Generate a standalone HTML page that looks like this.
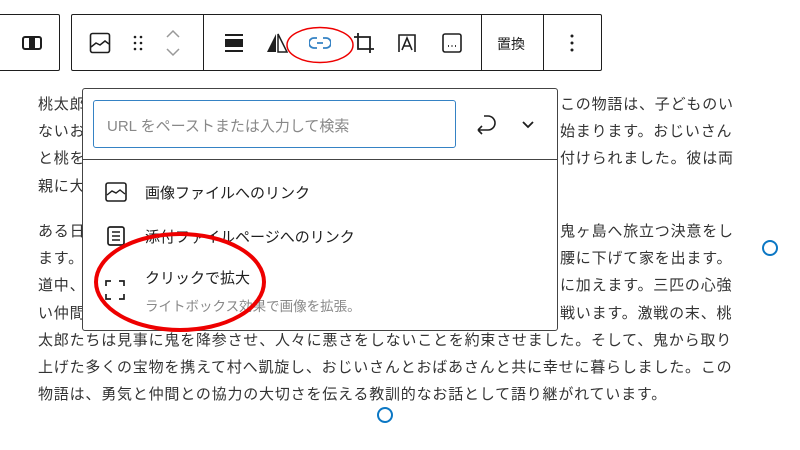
<!DOCTYPE html>
<html><head><meta charset="utf-8"><style>
*{margin:0;padding:0;box-sizing:border-box}
body{width:800px;height:450px;background:#fff;position:relative;overflow:hidden;font-family:"Liberation Sans","Noto Sans CJK JP",sans-serif;color:#1e1e1e}
.txt{position:absolute;font-size:15px;letter-spacing:0.8px;color:#333;white-space:nowrap;line-height:27.2px}
.box{position:absolute;border:1px solid #1e1e1e;border-radius:2px;background:#fff}
.sep{position:absolute;top:14px;width:1px;height:57px;background:#1e1e1e}
svg.i{position:absolute}
</style></head><body>
<div class="txt" style="left:38px;top:91px">
<div>桃太郎は日本の昔話の中でも</div>
<div>ないおじいさんとおばあさんが</div>
<div>と桃を割ると中から元気な男の</div>
<div>親に大切に育てられ、すくすくと成長しました。</div>
</div>
<div class="txt" style="left:560px;top:91px">
<div>この物語は、子どものい</div>
<div>始まります。おじいさん</div>
<div>付けられました。彼は両</div>
</div>
<div class="txt" style="left:38px;top:218px">
<div>ある日、桃太郎は村を苦しめる</div>
<div>ます。おばあさんが作ったきび</div>
<div>道中、犬、猿、きじにきびだん</div>
<div>い仲間とともに鬼ヶ島に到着し</div>
<div>太郎たちは見事に鬼を降参させ、人々に悪さをしないことを約束させました。そして、鬼から取り</div>
<div>上げた多くの宝物を携えて村へ凱旋し、おじいさんとおばあさんと共に幸せに暮らしました。この</div>
<div>物語は、勇気と仲間との協力の大切さを伝える教訓的なお話として語り継がれています。</div>
</div>
<div class="txt" style="left:560px;top:218px">
<div>鬼ヶ島へ旅立つ決意をし</div>
<div>腰に下げて家を出ます。</div>
<div>に加えます。三匹の心強</div>
<div>戦います。激戦の末、桃</div>
</div>

<!-- toolbar -->
<div class="box" style="left:-4px;top:14px;width:64px;height:57px;"></div>
<div class="box" style="left:71px;top:14px;width:531px;height:57px;"></div>
<div class="sep" style="left:203px"></div>
<div class="sep" style="left:481px"></div>
<div class="sep" style="left:543px"></div>
<svg class="i" style="left:22px;top:35px" width="20" height="16"><rect x="1" y="2" width="18" height="12" rx="2" fill="none" stroke="#1e1e1e" stroke-width="2"/><rect x="7" y="2" width="6" height="12" fill="#1e1e1e"/></svg>
<svg class="i" style="left:89px;top:32px" width="22" height="22"><rect x="1.5" y="1.5" width="19" height="19" rx="2" fill="none" stroke="#1e1e1e" stroke-width="1.6"/><path d="M2 15 L7 11 L11 13 L16 9 L20 12" fill="none" stroke="#1e1e1e" stroke-width="1.5"/></svg>
<svg class="i" style="left:131px;top:34px" width="14" height="18" fill="#1e1e1e"><circle cx="4" cy="3" r="1.3"/><circle cx="10" cy="3" r="1.3"/><circle cx="4" cy="9" r="1.3"/><circle cx="10" cy="9" r="1.3"/><circle cx="4" cy="15" r="1.3"/><circle cx="10" cy="15" r="1.3"/></svg>
<svg class="i" style="left:165px;top:29px" width="16" height="28"><path d="M2 8 L8 2 L14 8 M2 20 L8 26 L14 20" fill="none" stroke="#999" stroke-width="1.5"/></svg>
<svg class="i" style="left:224px;top:33px" width="20" height="20" fill="#1e1e1e"><rect x="1" y="1" width="18" height="2"/><rect x="1" y="6" width="18" height="8"/><rect x="1" y="17" width="18" height="2"/></svg>
<svg class="i" style="left:266px;top:33px" width="22" height="20"><path d="M10 1 L1 19 L10 19 Z" fill="#1e1e1e"/><path d="M12 1 L21 19 L12 19 Z" fill="none" stroke="#1e1e1e" stroke-width="1.5"/></svg>
<svg class="i" style="left:309px;top:36px" width="22" height="14"><path d="M8 2 H5 A5 5 0 0 0 5 12 H8 M14 2 H17 A5 5 0 0 1 17 12 H14 M8 7 H14" fill="none" stroke="#3582c4" stroke-width="1.8"/></svg>
<svg class="i" style="left:353px;top:32px" width="22" height="22"><path d="M5 1 V17 H21 M1 5 H17 V21" fill="none" stroke="#1e1e1e" stroke-width="1.8"/></svg>
<svg class="i" style="left:397px;top:33px" width="20" height="20"><path d="M2 19 V2 H18 V19" fill="none" stroke="#1e1e1e" stroke-width="1.6"/><path d="M5 17 L10 5 L15 17 M7 13 H13" fill="none" stroke="#1e1e1e" stroke-width="1.6"/></svg>
<svg class="i" style="left:442px;top:33px" width="20" height="20"><rect x="1" y="1" width="18" height="18" rx="2" fill="none" stroke="#1e1e1e" stroke-width="1.6"/><path d="M6 13 H7 M9.5 13 H10.5 M13 13 H14" stroke="#1e1e1e" stroke-width="1.8"/></svg>
<div style="position:absolute;left:497px;top:34px;font-size:14px;color:#1e1e1e">置換</div>
<svg class="i" style="left:569px;top:33px" width="6" height="20" fill="#1e1e1e"><circle cx="3" cy="3" r="1.5"/><circle cx="3" cy="10" r="1.5"/><circle cx="3" cy="17" r="1.5"/></svg>
<svg class="i" style="left:285px;top:25px" width="70" height="40"><ellipse cx="35" cy="20" rx="33" ry="17.5" fill="none" stroke="#e00" stroke-width="1.5"/></svg>

<!-- popover -->
<div class="box" style="left:82px;top:88px;width:476px;height:243px;border-color:#444;border-radius:3px"></div>
<div style="position:absolute;left:93px;top:100px;width:363px;height:48px;border:1.5px solid #3582c4;border-radius:3px;"></div>
<div style="position:absolute;left:107px;top:115px;font-size:15px;color:#888">URL をペーストまたは入力して検索</div>
<svg class="i" style="left:475px;top:113px" width="24" height="24"><path d="M3 17 L7 13 M3 17 L7 21 M3 17 H13 A7 7 0 0 0 13 3 H9" fill="none" stroke="#1e1e1e" stroke-width="1.6"/></svg>
<svg class="i" style="left:521px;top:120px" width="14" height="10"><path d="M2 2 L7 7 L12 2" fill="none" stroke="#1e1e1e" stroke-width="1.8"/></svg>
<div style="position:absolute;left:83px;top:159px;width:474px;height:1px;background:#444"></div>
<svg class="i" style="left:105px;top:182px" width="22" height="20"><rect x="1" y="1" width="20" height="18" rx="2" fill="none" stroke="#1e1e1e" stroke-width="1.6"/><path d="M2 13 L7 9 L11 11 L15 8 L20 12" fill="none" stroke="#1e1e1e" stroke-width="1.4"/></svg>
<div style="position:absolute;left:145px;top:182px;font-size:15px">画像ファイルへのリンク</div>
<svg class="i" style="left:107px;top:226px" width="18" height="20"><rect x="1" y="1" width="16" height="18" rx="2" fill="none" stroke="#1e1e1e" stroke-width="1.7"/><path d="M5 6 H13 M5 10 H13 M5 14 H13" stroke="#1e1e1e" stroke-width="1.6"/></svg>
<div style="position:absolute;left:145px;top:226px;font-size:15px">添付ファイルページへのリンク</div>
<svg class="i" style="left:105px;top:280px" width="20" height="20"><path d="M1 6 V1 H6 M14 1 H19 V6 M19 14 V19 H14 M6 19 H1 V14" fill="none" stroke="#1e1e1e" stroke-width="1.7"/></svg>
<div style="position:absolute;left:145px;top:267px;font-size:15px">クリックで拡大</div>
<div style="position:absolute;left:145px;top:295px;font-size:13.5px;color:#888">ライトボックス効果で画像を拡張。</div>
<svg class="i" style="left:90px;top:228px" width="185" height="110"><ellipse cx="90" cy="54" rx="84" ry="48" fill="none" stroke="#e00" stroke-width="4"/></svg>

<svg class="i" style="left:760px;top:238px" width="20" height="20"><circle cx="10" cy="10" r="7" fill="#fff" stroke="#0b77c4" stroke-width="2"/></svg>
<svg class="i" style="left:375px;top:405px" width="20" height="20"><circle cx="10" cy="10" r="7" fill="#fff" stroke="#0b77c4" stroke-width="2"/></svg>
</body></html>
